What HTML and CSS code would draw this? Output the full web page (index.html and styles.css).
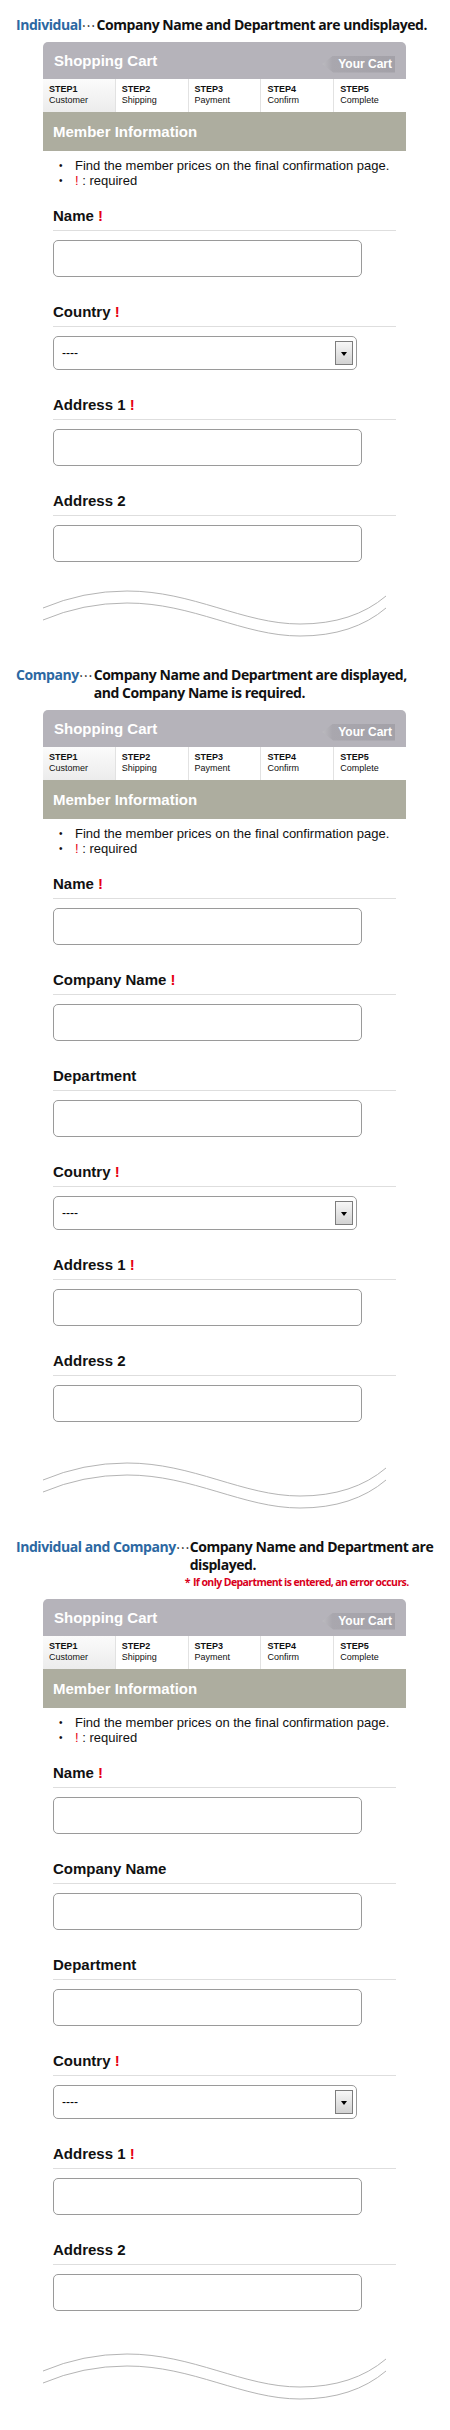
FILE: index.html
```html
<!DOCTYPE html>
<html lang="en">
<head>
<meta charset="utf-8">
<title>Member Information – form variations</title>
<link rel="stylesheet" href="styles.css">
</head>
<body>

<section class="case case-1">
  <h2 class="case-title"><span class="kind">Individual</span><span class="dots">…</span><span class="desc">Company Name and Department are undisplayed.</span></h2>
  <div class="cart">
    <div class="cart-head"><span class="cart-title">Shopping Cart</span><span class="your-cart">Your Cart</span></div>
    <ol class="steps">
      <li class="current"><b>STEP1</b><span>Customer</span></li>
      <li><b>STEP2</b><span>Shipping</span></li>
      <li><b>STEP3</b><span>Payment</span></li>
      <li><b>STEP4</b><span>Confirm</span></li>
      <li><b>STEP5</b><span>Complete</span></li>
    </ol>
    <div class="member-bar">Member Information</div>
    <ul class="notes">
      <li>Find the member prices on the final confirmation page.</li>
      <li><span class="req">!</span>&nbsp;: required</li>
    </ul>
    <div class="fields">
      <div class="field"><div class="label">Name <span class="req">!</span></div><input class="text" type="text"></div>
      <div class="field"><div class="label">Country <span class="req">!</span></div><div class="select"><span>----</span><i class="arrow"></i></div></div>
      <div class="field"><div class="label">Address 1 <span class="req">!</span></div><input class="text" type="text"></div>
      <div class="field"><div class="label">Address 2</div><input class="text" type="text"></div>
    </div>
  </div>
  <svg class="wave" width="345" height="50" viewBox="0 0 345 50"><path d="M0,20 Q40,3 84,3 C150,3 200,36 257,36 Q310,36 343,8"/><path d="M0,32 Q40,15 84,15 C150,15 200,48 257,48 Q310,48 343,20"/></svg>
</section>

<section class="case case-2">
  <h2 class="case-title"><span class="kind">Company</span><span class="dots">…</span><span class="desc">Company Name and Department are displayed, and Company Name is required.</span></h2>
  <div class="cart">
    <div class="cart-head"><span class="cart-title">Shopping Cart</span><span class="your-cart">Your Cart</span></div>
    <ol class="steps">
      <li class="current"><b>STEP1</b><span>Customer</span></li>
      <li><b>STEP2</b><span>Shipping</span></li>
      <li><b>STEP3</b><span>Payment</span></li>
      <li><b>STEP4</b><span>Confirm</span></li>
      <li><b>STEP5</b><span>Complete</span></li>
    </ol>
    <div class="member-bar">Member Information</div>
    <ul class="notes">
      <li>Find the member prices on the final confirmation page.</li>
      <li><span class="req">!</span>&nbsp;: required</li>
    </ul>
    <div class="fields">
      <div class="field"><div class="label">Name <span class="req">!</span></div><input class="text" type="text"></div>
      <div class="field"><div class="label">Company Name <span class="req">!</span></div><input class="text" type="text"></div>
      <div class="field"><div class="label">Department</div><input class="text" type="text"></div>
      <div class="field"><div class="label">Country <span class="req">!</span></div><div class="select"><span>----</span><i class="arrow"></i></div></div>
      <div class="field"><div class="label">Address 1 <span class="req">!</span></div><input class="text" type="text"></div>
      <div class="field"><div class="label">Address 2</div><input class="text" type="text"></div>
    </div>
  </div>
  <svg class="wave" width="345" height="50" viewBox="0 0 345 50"><path d="M0,20 Q40,3 84,3 C150,3 200,36 257,36 Q310,36 343,8"/><path d="M0,32 Q40,15 84,15 C150,15 200,48 257,48 Q310,48 343,20"/></svg>
</section>

<section class="case case-3">
  <h2 class="case-title"><span class="kind">Individual and Company</span><span class="dots">…</span><span class="desc">Company Name and Department are displayed.<small class="warn"><span class="star">*</span> If only Department is entered, an error occurs.</small></span></h2>
  <div class="cart">
    <div class="cart-head"><span class="cart-title">Shopping Cart</span><span class="your-cart">Your Cart</span></div>
    <ol class="steps">
      <li class="current"><b>STEP1</b><span>Customer</span></li>
      <li><b>STEP2</b><span>Shipping</span></li>
      <li><b>STEP3</b><span>Payment</span></li>
      <li><b>STEP4</b><span>Confirm</span></li>
      <li><b>STEP5</b><span>Complete</span></li>
    </ol>
    <div class="member-bar">Member Information</div>
    <ul class="notes">
      <li>Find the member prices on the final confirmation page.</li>
      <li><span class="req">!</span>&nbsp;: required</li>
    </ul>
    <div class="fields">
      <div class="field"><div class="label">Name <span class="req">!</span></div><input class="text" type="text"></div>
      <div class="field"><div class="label">Company Name</div><input class="text" type="text"></div>
      <div class="field"><div class="label">Department</div><input class="text" type="text"></div>
      <div class="field"><div class="label">Country <span class="req">!</span></div><div class="select"><span>----</span><i class="arrow"></i></div></div>
      <div class="field"><div class="label">Address 1 <span class="req">!</span></div><input class="text" type="text"></div>
      <div class="field"><div class="label">Address 2</div><input class="text" type="text"></div>
    </div>
  </div>
  <svg class="wave" width="345" height="50" viewBox="0 0 345 50"><path d="M0,20 Q40,3 84,3 C150,3 200,36 257,36 Q310,36 343,8"/><path d="M0,32 Q40,15 84,15 C150,15 200,48 257,48 Q310,48 343,20"/></svg>
</section>

</body>
</html>
```
FILE: styles.css
```css
* { box-sizing: border-box; }

html, body {
  margin: 0;
  padding: 0;
  background: #ffffff;
}

body {
  width: 450px;
  font-family: "Liberation Sans", Arial, sans-serif;
  color: #000;
}

.case {
  display: flex;
  flex-direction: column;
}

.case-1 { padding-top: 16px; }
.case-2 { padding-top: 28px; }
.case-3 { padding-top: 28px; }

/* heading */
.case-title {
  margin: 0 0 0 16px;
  display: flex;
  align-items: flex-start;
  font-family: "Open Sans", "Noto Sans", sans-serif;
  font-weight: 700;
  font-size: 14px;
  line-height: 18px;
  letter-spacing: -0.45px;
  color: #111;
}

.kind {
  color: #2c68a2;
  white-space: nowrap;
}

.dots {
  white-space: nowrap;
  font-family: "Noto Sans CJK JP", sans-serif;
  font-weight: 400;
  letter-spacing: 0;
  width: 15px;
}

.desc {
  display: flex;
  flex-direction: column;
  align-items: flex-start;
  white-space: nowrap;
}

.case-2 .desc {
  white-space: normal;
  max-width: 326px;
}

.case-3 .desc {
  white-space: normal;
}

.warn {
  margin-left: -5px;
  color: #d9001b;
  font-size: 10.5px;
  line-height: 17px;
  letter-spacing: -0.6px;
  white-space: nowrap;
}

.star { margin-right: 1px; }

/* cart */
.cart {
  margin: 8px 0 0 43px;
  width: 363px;
}

.cart-head {
  height: 37px;
  display: flex;
  align-items: center;
  justify-content: space-between;
  padding: 0 11px 0 11px;
  background: #b5b3ba;
  border-radius: 5px 5px 0 0;
}

.cart-title {
  color: #fff;
  font-weight: 700;
  font-size: 15px;
}

.your-cart {
  margin-top: 7px;
  height: 17px;
  line-height: 17px;
  padding: 0 3px 0 16px;
  color: #fff;
  font-weight: 700;
  font-size: 12px;
  background: linear-gradient(to right, #bcbbc0 0%, #a9a7ae 14%, #a3a1a8 100%);
  clip-path: polygon(11px 0, 100% 0, 100% 100%, 11px 100%, 0 50%);
}

.steps {
  list-style: none;
  margin: 0;
  padding: 0;
  display: flex;
  height: 33px;
  background: #fff;
}

.steps li {
  flex: 1 1 0;
  display: flex;
  flex-direction: column;
  padding: 5px 0 0 6px;
  border-left: 1px solid #e2e2e2;
  font-size: 9px;
  line-height: 11px;
  color: #111;
}

.steps li:first-child { border-left: 0; }

.steps li.current {
  background: linear-gradient(to bottom, #fbfbfb 0%, #ececec 100%);
}

.steps b { font-weight: 700; }

.member-bar {
  height: 39px;
  line-height: 39px;
  padding-left: 10px;
  background: #adad9f;
  color: #fff;
  font-weight: 700;
  font-size: 15px;
}

.notes {
  list-style: none;
  margin: 7px 0 0 0;
  padding: 0;
  font-size: 13px;
  line-height: 15px;
  color: #111;
}

.notes li {
  display: flex;
}

.notes li::before {
  content: "•";
  width: 16px;
  margin-left: 16px;
  font-size: 10px;
}

.req { color: #e60012; }

/* fields */
.fields {
  margin-top: 18px;
  padding: 0 10px;
  display: flex;
  flex-direction: column;
  gap: 25px;
}

.field {
  display: flex;
  flex-direction: column;
  align-items: flex-start;
}

.label {
  align-self: stretch;
  font-weight: 700;
  font-size: 15px;
  line-height: 20px;
  padding-bottom: 4px;
  border-bottom: 1px solid #dedede;
  color: #111;
}

.text {
  display: block;
  margin: 9px 0 0 0;
  width: 309px;
  height: 37px;
  border: 1px solid #9a9a9a;
  border-radius: 5px;
  background: #fff;
  font: 12px "Liberation Sans", Arial, sans-serif;
  padding: 0 8px;
}

.select {
  margin-top: 9px;
  width: 304px;
  height: 34px;
  border: 1px solid #9a9a9a;
  border-radius: 5px;
  display: flex;
  align-items: center;
  justify-content: space-between;
  padding: 0 3px 0 8px;
  font-size: 12px;
}

.arrow {
  width: 18px;
  height: 24px;
  border: 1px solid #7d7d7d;
  background: linear-gradient(to bottom, #f7f7f7 0%, #d2d2d2 100%);
  display: flex;
  align-items: center;
  justify-content: center;
}

.arrow::after {
  content: "";
  border-left: 3.5px solid transparent;
  border-right: 3.5px solid transparent;
  border-top: 4px solid #000;
  margin-top: 1px;
}

/* wave */
.wave {
  display: block;
  margin-left: 43px;
  fill: none;
  stroke: #b4b4b4;
  stroke-width: 1;
}

.case-1 .wave { margin-top: 26px; }
.case-2 .wave { margin-top: 38px; }
.case-3 .wave { margin-top: 40px; }
```
